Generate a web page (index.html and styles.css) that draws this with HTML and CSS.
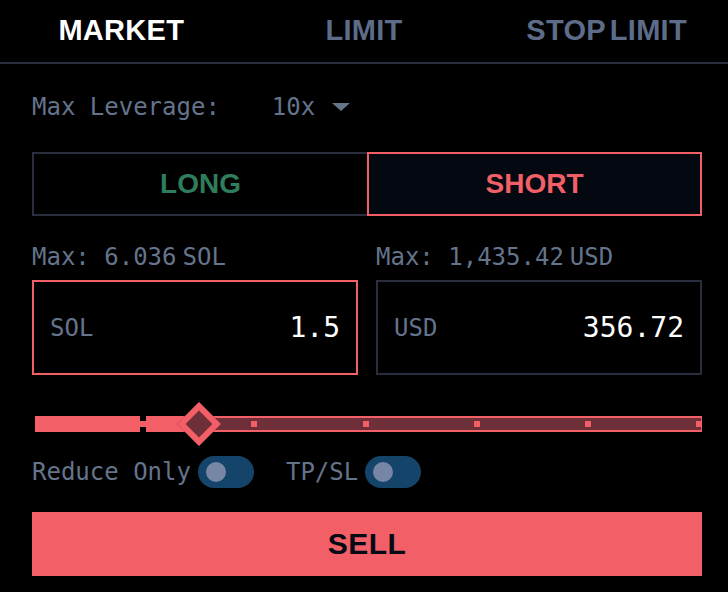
FILE: index.html
```html
<!DOCTYPE html>
<html>
<head>
<meta charset="utf-8">
<link rel="stylesheet" href="styles.css">
</head>
<body>
<div class="app">
  <nav class="tabs">
    <div class="tab active">MARKET</div>
    <div class="tab">LIMIT</div>
    <div class="tab">STOP LIMIT</div>
  </nav>
  <div class="panel">
    <div class="leverage">
      <span class="lev-label">Max Leverage:</span>
      <span class="lev-value">10x</span>
      <svg class="caret" width="18" height="8" viewBox="0 0 18 8"><path d="M0 0 H18 L9 8 Z" fill="#64748b"/></svg>
    </div>
    <div class="side">
      <div class="side-btn long">LONG</div>
      <div class="side-btn short">SHORT</div>
    </div>
    <div class="amounts">
      <div class="amount">
        <div class="max">Max: 6.036<span class="unit">SOL</span></div>
        <div class="field active"><span class="field-label">SOL</span><span class="field-value">1.5</span></div>
      </div>
      <div class="amount">
        <div class="max">Max: 1,435.42<span class="unit">USD</span></div>
        <div class="field"><span class="field-label">USD</span><span class="field-value">356.72</span></div>
      </div>
    </div>
    <div class="slider">
      <div class="track">
        <span class="tick tick-start"></span>
        <span class="seg seg-fill"></span>
        <span class="tick tick-fill"></span>
        <span class="seg seg-part"></span>
        <span class="tick"></span>
        <span class="seg"></span>
        <span class="tick"></span>
        <span class="seg"></span>
        <span class="tick"></span>
        <span class="seg"></span>
        <span class="tick"></span>
        <span class="seg"></span>
        <span class="tick tick-end"></span>
      </div>
      <span class="thumb" style="left:167px"></span>
    </div>
    <div class="opts">
      <div class="opt"><span>Reduce Only</span><span class="switch"></span></div>
      <div class="opt"><span>TP/SL</span><span class="switch"></span></div>
    </div>
    <div class="sell">SELL</div>
  </div>
</div>
</body>
</html>
```

FILE: styles.css
```css
html, body {
  margin: 0;
  padding: 0;
  background: #000;
}
body {
  font-family: "DejaVu Sans Mono", monospace;
  color: #64748b;
  font-size: 24px;
}
.app {
  width: 728px;
  height: 592px;
  overflow: hidden;
  background: #000;
}
.tabs {
  display: grid;
  grid-template-columns: repeat(3, 1fr);
  height: 60px;
  padding-bottom: 2px;
  border-bottom: 2px solid #2a2d3d;
  align-items: center;
}
.tab {
  text-align: center;
  font-family: "Liberation Sans", Arial, sans-serif;
  font-weight: 700;
  font-size: 29px;
  line-height: 28px;
  color: #5d6c89;
  letter-spacing: 0.3px;
  word-spacing: -4px;
}
.tab.active {
  color: #fff;
}
.panel {
  padding: 29px 26px 0 32px;
}
.leverage {
  display: flex;
  align-items: center;
  height: 28px;
  line-height: 28px;
}
.lev-value {
  margin-left: 52px;
}
.caret {
  margin-left: 17px;
}
.side {
  display: grid;
  grid-template-columns: 1fr 1fr;
  margin-top: 31px;
  height: 64px;
}
.side-btn {
  box-sizing: border-box;
  display: flex;
  align-items: center;
  justify-content: center;
  font-family: "Liberation Sans", Arial, sans-serif;
  font-weight: 700;
  font-size: 28px;
}
.long {
  border: 2px solid #2a2d3d;
  border-right: none;
  color: #2e7d5b;
}
.short {
  border: 2px solid #f25f67;
  background: #030811;
  color: #f25f67;
}
.amounts {
  display: grid;
  grid-template-columns: 1fr 1fr;
  column-gap: 18px;
  margin-top: 27px;
}
.max {
  line-height: 28px;
  height: 28px;
  white-space: nowrap;
}
.unit {
  margin-left: 6px;
}
.field {
  box-sizing: border-box;
  margin-top: 9px;
  height: 95px;
  border: 2px solid #2a2d3d;
  display: flex;
  align-items: center;
  justify-content: space-between;
  padding: 0 16px;
}
.field.active {
  border-color: #f25f67;
}
.field-value {
  color: #fff;
  font-size: 28px;
}
.slider {
  position: relative;
  margin-top: 26px;
  height: 46px;
  display: flex;
  align-items: center;
}
.track {
  display: flex;
  height: 16px;
  width: 673px;
}
.seg {
  flex: 1;
  box-sizing: border-box;
  background: #6e2f38;
  border-top: 2px solid #f25f67;
  border-bottom: 2px solid #f25f67;
}
.seg-fill {
  background: #f25f67;
}
.seg-part {
  background: linear-gradient(to right, #f25f67 50%, #6e2f38 50%);
}
.tick {
  width: 6px;
  box-sizing: border-box;
  display: flex;
  align-items: center;
  justify-content: center;
  background: #6e2f38;
  border-top: 2px solid #f25f67;
  border-bottom: 2px solid #f25f67;
}
.tick::after {
  content: "";
  width: 6px;
  height: 6px;
  background: #f25f67;
}
.tick-fill {
  width: 6px;
  background: #000;
  border: none;
}
.tick-start {
  width: 3px;
  background: #000;
  border: none;
}
.tick-start::after {
  display: none;
}
.tick-end {
  border-right: 1px solid #f25f67;
}
.thumb {
  position: absolute;
  top: 50%;
  width: 19px;
  height: 19px;
  border: 6px solid #f25f67;
  background: #6e2f38;
  transform: translate(-50%, -50%) rotate(45deg);
}
.opts {
  display: flex;
  align-items: center;
  gap: 32px;
  margin-top: 9px;
  height: 32px;
}
.opt {
  display: flex;
  align-items: center;
  gap: 7px;
}
.switch {
  position: relative;
  width: 56px;
  height: 32px;
  border-radius: 16px;
  background: #15446a;
}
.switch::after {
  content: "";
  position: absolute;
  left: 8px;
  top: 6px;
  width: 20px;
  height: 20px;
  border-radius: 50%;
  background: #7786a5;
}
.sell {
  margin-top: 24px;
  height: 64px;
  background: #f25f67;
  display: flex;
  align-items: center;
  justify-content: center;
  font-family: "Liberation Sans", Arial, sans-serif;
  font-weight: 700;
  font-size: 30px;
  letter-spacing: 0.5px;
  color: #050a14;
}
```
